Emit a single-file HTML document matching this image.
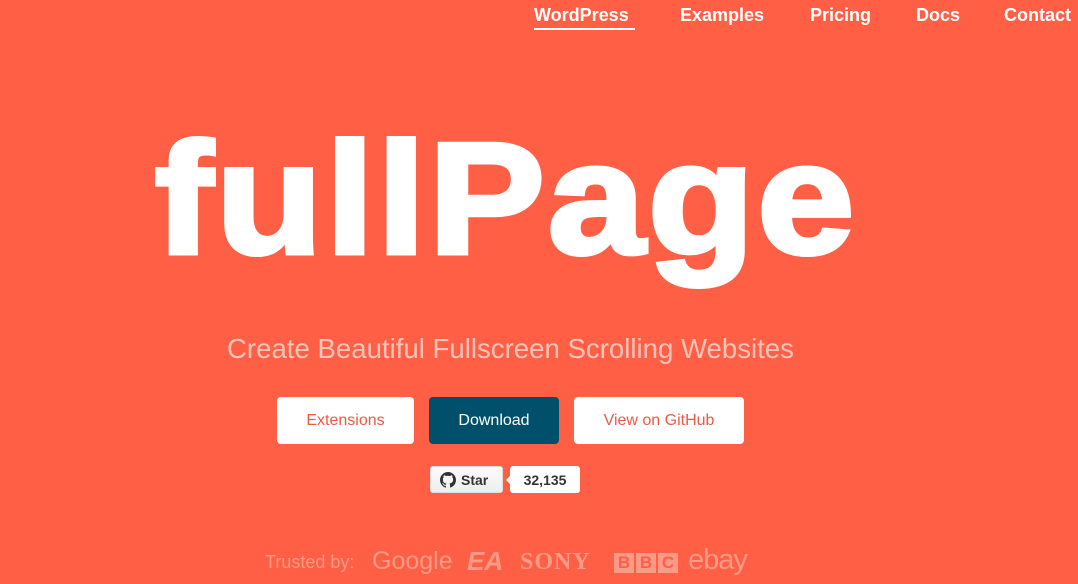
<!DOCTYPE html>
<html><head><meta charset="utf-8"><style>
body{margin:0;width:1078px;height:584px;overflow:hidden;background:#FF5F45;font-family:"Liberation Sans",Arial,sans-serif;position:relative}
.nav a{position:absolute;top:5px;color:#fff;font-weight:bold;font-size:18px;text-decoration:none;white-space:nowrap}
.title{position:absolute;left:155px;top:120px;font-size:158px;font-weight:bold;color:#fff;transform:scaleX(1.10);transform-origin:left top;letter-spacing:3px;line-height:1;-webkit-text-stroke:5px #fff}
.sub{position:absolute;left:227px;top:333px;font-size:27.6px;color:#FDC3B8;white-space:nowrap}
.btn{position:absolute;top:397px;height:47px;border-radius:4px;background:#fff;color:#EC5A44;font-size:16px;display:flex;align-items:center;justify-content:center}
.t{position:absolute;top:550px;font-size:19px;color:#FC9A88;white-space:nowrap}
</style></head><body>
<div class="nav">
<a style="left:534px">WordPress</a><div style="position:absolute;left:534px;top:28px;width:101px;height:2px;background:#fff"></div>
<a style="left:680px">Examples</a>
<a style="left:810px">Pricing</a>
<a style="left:916px">Docs</a>
<a style="left:1004px">Contact</a>
</div>
<div class="title">fullPage</div>
<div class="sub">Create Beautiful Fullscreen Scrolling Websites</div>
<div class="btn" style="left:277px;width:137px">Extensions</div>
<div class="btn" style="left:429px;width:130px;background:#00506B;color:#fff">Download</div>
<div class="btn" style="left:574px;width:170px">View on GitHub</div>
<div style="position:absolute;left:430px;top:466px;width:73px;height:27px;border-radius:3px;background:linear-gradient(#fcfcfc,#eee);border:1px solid #ddd;box-sizing:border-box;font-size:14px;font-weight:bold;color:#333;display:flex;align-items:center">
<svg width="16" height="16" viewBox="0 0 16 16" style="margin:0 5px 0 9px"><path fill="#333" d="M8 0C3.6 0 0 3.6 0 8c0 3.5 2.3 6.5 5.5 7.6.4.1.5-.2.5-.4v-1.4c-2.2.5-2.7-1-2.7-1-.4-.9-.9-1.2-.9-1.2-.7-.5.1-.5.1-.5.8.1 1.2.8 1.2.8.7 1.2 1.9.9 2.3.7.1-.5.3-.9.5-1.1-1.8-.2-3.6-.9-3.6-4 0-.9.3-1.6.8-2.1-.1-.2-.4-1 .1-2.1 0 0 .7-.2 2.2.8.6-.2 1.3-.3 2-.3s1.4.1 2 .3c1.5-1 2.2-.8 2.2-.8.4 1.1.2 1.9.1 2.1.5.6.8 1.3.8 2.1 0 3.1-1.9 3.7-3.6 3.9.3.3.5.8.5 1.5v2.2c0 .2.1.5.6.4C13.7 14.5 16 11.5 16 8c0-4.4-3.6-8-8-8z"/></svg>Star</div>
<div style="position:absolute;left:510px;top:466px;width:70px;height:27px;border-radius:3px;background:#fff;font-size:14px;font-weight:bold;color:#333;display:flex;align-items:center;justify-content:center">32,135</div>
<div style="position:absolute;left:501px;top:475px;width:0;height:0;border:5px solid transparent;border-right-color:#fff"></div>
<div class="t" style="left:265px;font-size:18px;top:552px">Trusted by:</div>
<div class="t" style="left:372px;font-size:25px;top:547px">Google</div>
<div class="t" style="left:467px;font-size:26px;top:546px;font-weight:bold;font-style:italic">EA</div>
<div class="t" style="left:520px;font-size:24px;top:549px;font-family:'Liberation Serif',serif;font-weight:bold;letter-spacing:1px">SONY</div>
<div class="t" style="left:614px;top:553px;display:flex;gap:2px"><span style="background:#FC9A88;color:#FF5F45;font-weight:bold;font-size:17px;width:20px;text-align:center">B</span><span style="background:#FC9A88;color:#FF5F45;font-weight:bold;font-size:17px;width:20px;text-align:center">B</span><span style="background:#FC9A88;color:#FF5F45;font-weight:bold;font-size:17px;width:20px;text-align:center">C</span></div>
<div class="t" style="left:688px;font-size:29px;top:544px;letter-spacing:-1px">ebay</div>
</body></html>
